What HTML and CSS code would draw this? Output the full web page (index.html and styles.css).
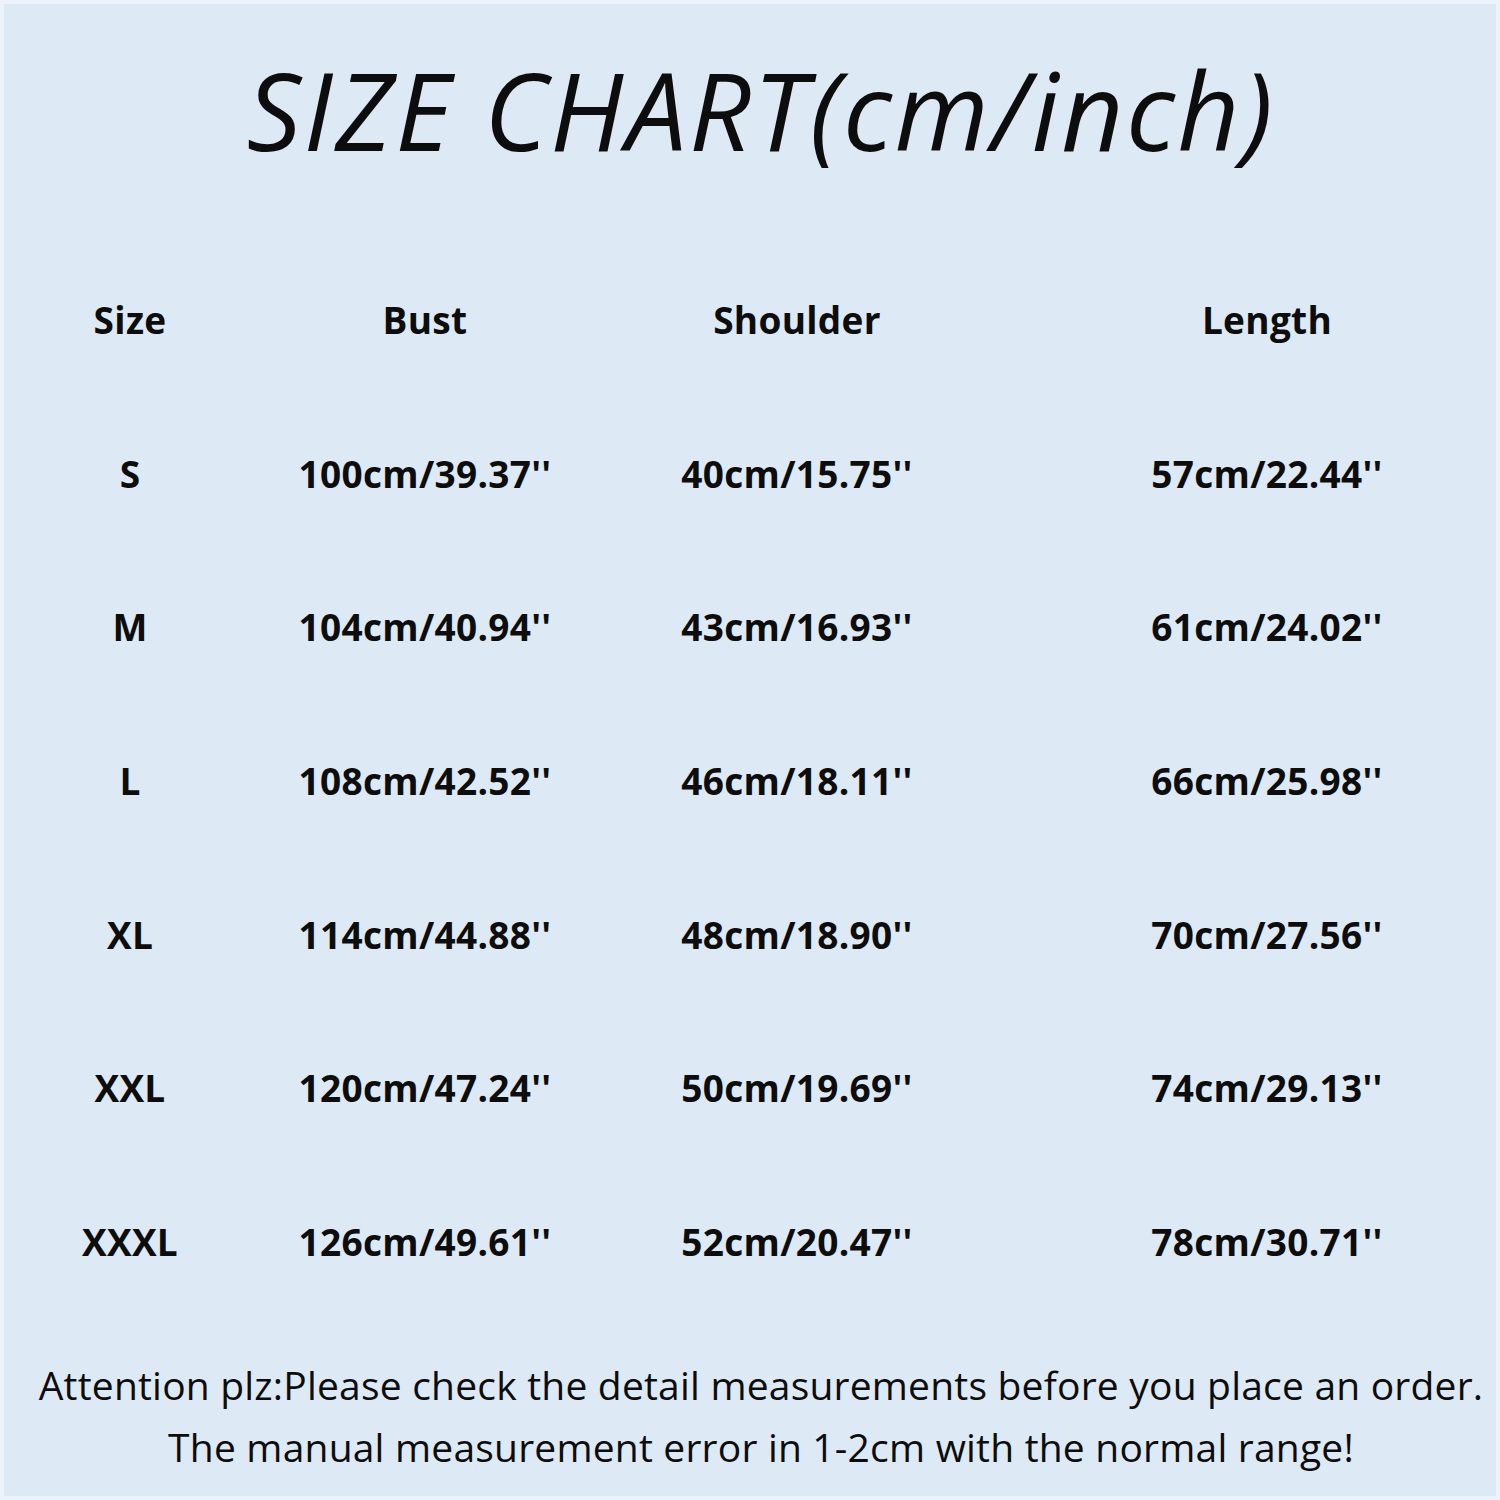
FILE: index.html
```html
<!DOCTYPE html>
<html>
<head>
<meta charset="utf-8">
<link rel="stylesheet" href="styles.css">
</head>
<body>
<div class="page">
  <h1 class="title">SIZE CHART(cm/inch)</h1>
  <div class="table">
    <div class="cell head">Size</div><div class="cell head">Bust</div><div class="cell head">Shoulder</div><div class="cell head c4">Length</div>
    <div class="cell">S</div><div class="cell">100cm/39.37''</div><div class="cell">40cm/15.75''</div><div class="cell c4">57cm/22.44''</div>
    <div class="cell">M</div><div class="cell">104cm/40.94''</div><div class="cell">43cm/16.93''</div><div class="cell c4">61cm/24.02''</div>
    <div class="cell">L</div><div class="cell">108cm/42.52''</div><div class="cell">46cm/18.11''</div><div class="cell c4">66cm/25.98''</div>
    <div class="cell">XL</div><div class="cell">114cm/44.88''</div><div class="cell">48cm/18.90''</div><div class="cell c4">70cm/27.56''</div>
    <div class="cell">XXL</div><div class="cell">120cm/47.24''</div><div class="cell">50cm/19.69''</div><div class="cell c4">74cm/29.13''</div>
    <div class="cell">XXXL</div><div class="cell">126cm/49.61''</div><div class="cell">52cm/20.47''</div><div class="cell c4">78cm/30.71''</div>
  </div>
  <div class="note">
    <p>Attention plz:Please check the detail measurements before you place an order.</p>
    <p>The manual measurement error in 1-2cm with the normal range!</p>
  </div>
</div>
</body>
</html>
```
FILE: styles.css
```css
html, body { margin: 0; padding: 0; }
.page {
  width: 1500px;
  height: 1500px;
  box-sizing: border-box;
  background: #dde9f5;
  box-shadow: inset 0 0 0 4px #edf3fa;
  color: #0d0d0d;
  overflow: hidden;
}
.title {
  margin: 0;
  height: 243px;
  box-sizing: border-box;
  padding-top: 50px;
  padding-left: 22px;
  text-align: center;
  font-family: "Open Sans", sans-serif;
  font-weight: 400;
  font-style: italic;
  font-size: 108px;
  line-height: 120px;
  letter-spacing: 2.5px;
}
.table {
  display: grid;
  grid-template-columns: 260px 330px 414px 466px;
  grid-auto-rows: 153.6px;
}
.cell {
  display: flex;
  align-items: center;
  justify-content: center;
  font-family: "Open Sans", sans-serif;
  font-weight: 700;
  font-size: 37px;
  letter-spacing: 0.3px;
}
.c4 { padding-left: 60px; }
.note {
  padding-top: 36px;
  padding-left: 22px;
  text-align: center;
  font-family: "Open Sans", sans-serif;
  font-size: 39px;
  line-height: 62px;
  letter-spacing: 0.2px;
}
.note p { margin: 0; }
```
